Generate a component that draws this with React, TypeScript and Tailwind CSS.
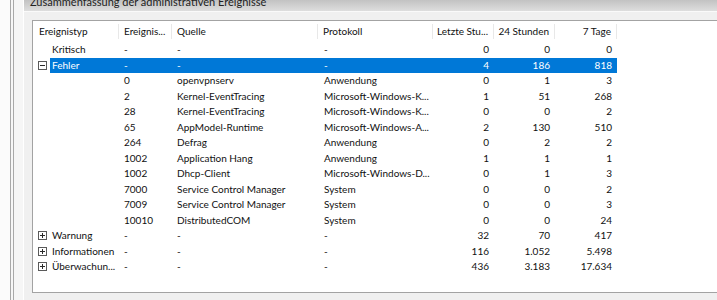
import React from "react";

type Row = {
  kind: "group" | "child";
  label?: string;
  expander?: "plus" | "minus" | null;
  id: string;
  source: string;
  log: string;
  h1: string;
  h24: string;
  d7: string;
  selected?: boolean;
};

const rows: Row[] = [
  { kind: "group", label: "Kritisch", expander: null, id: "-", source: "-", log: "-", h1: "0", h24: "0", d7: "0" },
  { kind: "group", label: "Fehler", expander: "minus", id: "-", source: "-", log: "-", h1: "4", h24: "186", d7: "818", selected: true },
  { kind: "child", id: "0", source: "openvpnserv", log: "Anwendung", h1: "0", h24: "1", d7: "3" },
  { kind: "child", id: "2", source: "Kernel-EventTracing", log: "Microsoft-Windows-K...", h1: "1", h24: "51", d7: "268" },
  { kind: "child", id: "28", source: "Kernel-EventTracing", log: "Microsoft-Windows-K...", h1: "0", h24: "0", d7: "2" },
  { kind: "child", id: "65", source: "AppModel-Runtime", log: "Microsoft-Windows-A...", h1: "2", h24: "130", d7: "510" },
  { kind: "child", id: "264", source: "Defrag", log: "Anwendung", h1: "0", h24: "2", d7: "2" },
  { kind: "child", id: "1002", source: "Application Hang", log: "Anwendung", h1: "1", h24: "1", d7: "1" },
  { kind: "child", id: "1002", source: "Dhcp-Client", log: "Microsoft-Windows-D...", h1: "0", h24: "1", d7: "3" },
  { kind: "child", id: "7000", source: "Service Control Manager", log: "System", h1: "0", h24: "0", d7: "2" },
  { kind: "child", id: "7009", source: "Service Control Manager", log: "System", h1: "0", h24: "0", d7: "3" },
  { kind: "child", id: "10010", source: "DistributedCOM", log: "System", h1: "0", h24: "0", d7: "24" },
  { kind: "group", label: "Warnung", expander: "plus", id: "-", source: "-", log: "-", h1: "32", h24: "70", d7: "417" },
  { kind: "group", label: "Informationen", expander: "plus", id: "-", source: "-", log: "-", h1: "116", h24: "1.052", d7: "5.498" },
  { kind: "group", label: "Überwachun...", expander: "plus", id: "-", source: "-", log: "-", h1: "436", h24: "3.183", d7: "17.634" },
];

function Expander({ type }: { type: "plus" | "minus" }) {
  return (
    <svg width="9" height="9" viewBox="0 0 9 9" className="block">
      <rect x="0.5" y="0.5" width="8" height="8" fill="white" stroke="#5a5a5a" />
      <line x1="2" y1="4.5" x2="7" y2="4.5" stroke="#2a2a2a" />
      {type === "plus" && <line x1="4.5" y1="2" x2="4.5" y2="7" stroke="#2a2a2a" />}
    </svg>
  );
}

export default function App() {
  return (
    <div
      className="flex h-[300px] w-[717px] overflow-hidden bg-[#f0f0f0] text-[10px] text-[#111]"
      style={{ fontFamily: "Lato, 'Noto Sans', sans-serif" }}
    >
      {/* left splitter strip */}
      <div className="flex h-full w-[24px] shrink-0">
        <div className="w-[10px] bg-[#fbfbfb]" />
        <div className="w-px bg-[#a9a9a9]" />
        <div className="w-[2px] bg-[#f7f7f7]" />
        <div className="w-px bg-[#a9a9a9]" />
        <div className="w-[9px] bg-[#f6f6f6]" />
        <div className="w-px bg-white" />
      </div>

      <div className="flex min-w-0 flex-1 flex-col">
        {/* group title bar, cut off at the top */}
        <div className="h-[11px] shrink-0 overflow-hidden bg-gradient-to-b from-[#c2c2c2] to-[#dedede] pl-[6px]">
          <div className="-mt-[5px] whitespace-nowrap text-[11px] leading-[13px] text-[#222]">
            Zusammenfassung der administrativen Ereignisse
          </div>
        </div>
        <div className="h-px shrink-0 bg-[#fafafa]" />

        <div className="flex-1 pb-[7px] pl-[8px] pt-[8px]">
          <div className="h-full border border-r-0 border-[#a3a3a3] bg-white">
            {/* header */}
            <div className="flex h-[21px] items-center whitespace-nowrap">
              <div className="w-[86px] shrink-0 border-r border-[#e8e8e8] pl-[6px]">Ereignistyp</div>
              <div className="w-[53px] shrink-0 border-r border-[#e8e8e8] pl-[5px]">Ereignis...</div>
              <div className="w-[146px] shrink-0 border-r border-[#e8e8e8] pl-[5px]">Quelle</div>
              <div className="w-[115px] shrink-0 border-r border-[#e8e8e8] pl-[5px]">Protokoll</div>
              <div className="w-[61px] shrink-0 border-r border-[#e8e8e8] pr-[5px] text-right">Letzte Stu...</div>
              <div className="w-[61px] shrink-0 border-r border-[#e8e8e8] pr-[5px] text-right">24 Stunden</div>
              <div className="w-[62px] shrink-0 border-r border-[#e8e8e8] pr-[5px] text-right">7 Tage</div>
            </div>

            {/* rows */}
            {rows.map((r, i) => (
              <div key={i} className="flex h-[15.5px] items-center whitespace-nowrap">
                <div className="flex w-[17px] shrink-0 items-center pl-[5px]">
                  {r.expander && <Expander type={r.expander} />}
                </div>
                <div
                  className={`flex h-full items-center ${
                    r.selected ? "bg-[#0078d7] text-white" : ""
                  }`}
                >
                  <div className="w-[69px] shrink-0 pl-[2px]">{r.kind === "group" ? r.label : ""}</div>
                  <div className="w-[53px] shrink-0 pl-[5px]">{r.id}</div>
                  <div className="w-[146px] shrink-0 pl-[5px]">{r.source}</div>
                  <div className="w-[115px] shrink-0 pl-[6px]">{r.log}</div>
                  <div className="w-[61px] shrink-0 pr-[5px] text-right">{r.h1}</div>
                  <div className="w-[61px] shrink-0 pr-[5px] text-right">{r.h24}</div>
                  <div className="w-[62px] shrink-0 pr-[5px] text-right">{r.d7}</div>
                </div>
              </div>
            ))}
          </div>
        </div>
      </div>
    </div>
  );
}
